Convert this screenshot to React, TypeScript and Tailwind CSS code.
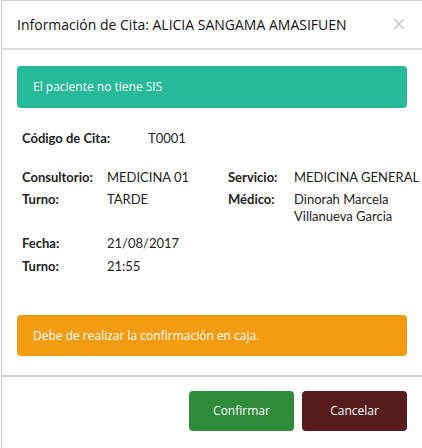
import React from "react";

const Row = ({
  label,
  value,
  labelW = "w-[85px]",
}: {
  label: string;
  value: React.ReactNode;
  labelW?: string;
}) => (
  <div className="flex">
    <span className={`${labelW} shrink-0 font-bold`}>{label}</span>
    <span className="whitespace-nowrap">{value}</span>
  </div>
);

const App = () => {
  return (
    <div
      className="h-[448px] w-[422px] overflow-hidden bg-white text-[13px] text-[#222]"
      style={{ fontFamily: '"Open Sans", "Liberation Sans", sans-serif' }}
    >
      <div className="ml-px h-full border-t border-l border-[#cfcfcf]">
        {/* header */}
        <div className="flex h-[49px] items-center justify-between border-b-2 border-[#dcdcdc] pl-[15px] pr-[17px]">
          <h4 className="text-[14px] text-[#111]">
            Información de Cita: ALICIA SANGAMA AMASIFUEN
          </h4>
          <svg width="12" height="12" viewBox="0 0 12 12" className="mt-[-1px]">
            <path d="M1 1L11 11M11 1L1 11" stroke="#bdbdbd" strokeWidth="1.2" />
          </svg>
        </div>

        {/* body */}
        <div className="h-[327px] border-b-2 border-[#cfcfcf] px-[15px] pt-[16px]">
          <div className="flex h-[42px] items-center rounded-[4px] bg-[#26b99a] px-[16px] text-[12px] text-white">
            El paciente no tiene SIS
          </div>

          <div
            className="px-[5px] text-[13px] leading-[17px]"
            style={{ fontFamily: 'Lato, "Liberation Sans", sans-serif' }}
          >
            <div className="mt-[22px]">
              <Row label="Código de Cita:" value="T0001" labelW="w-[126px]" />
            </div>

            <div className="mt-[22px] grid grid-cols-[206px_1fr]">
              <div className="flex flex-col gap-[5px]">
                <Row label="Consultorio:" value="MEDICINA 01" />
                <Row label="Turno:" value="TARDE" />
              </div>
              <div className="flex flex-col gap-[5px]">
                <Row label="Servicio:" value="MEDICINA GENERAL" labelW="w-[66px]" />
                <Row
                  label="Médico:"
                  value={
                    <>
                      Dinorah Marcela
                      <br />
                      Villanueva Garcia
                    </>
                  }
                  labelW="w-[66px]"
                />
              </div>
            </div>

            <div className="mt-[10px] flex flex-col gap-[6px]">
              <Row label="Fecha:" value="21/08/2017" />
              <Row label="Turno:" value="21:55" />
            </div>
          </div>

          <div className="mt-[40px] flex h-[41px] items-center rounded-[4px] bg-[#f39c12] px-[16px] text-[12px] text-white">
            Debe de realizar la confirmación en caja.
          </div>
        </div>

        {/* footer */}
        <div className="flex justify-end gap-[8px] pr-[15px] pt-[14px]">
          <button className="h-[40px] w-[105px] rounded-[4px] bg-[#2e8b3a] text-[12px] text-white">
            Confirmar
          </button>
          <button className="h-[40px] w-[105px] rounded-[4px] bg-[#561b1b] text-[12px] text-white">
            Cancelar
          </button>
        </div>
      </div>
    </div>
  );
};

export default App;
